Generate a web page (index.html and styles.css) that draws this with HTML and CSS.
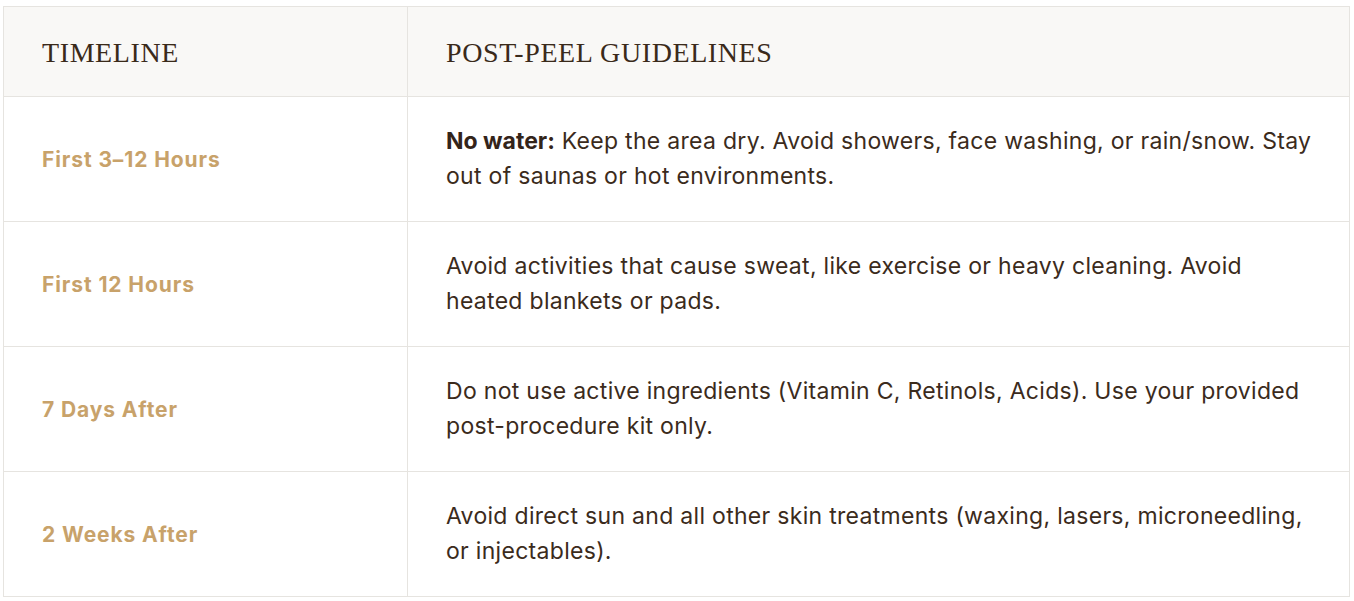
FILE: index.html
```html
<!DOCTYPE html>
<html lang="en">
<head>
<meta charset="utf-8">
<title>Post-Peel Guidelines</title>
<link rel="stylesheet" href="styles.css">
</head>
<body>
<div class="wrap">
<table class="guide">
  <colgroup><col class="col-time"><col class="col-text"></colgroup>
  <thead>
    <tr><th>TIMELINE</th><th>POST-PEEL GUIDELINES</th></tr>
  </thead>
  <tbody>
    <tr>
      <td class="time">First 3–12 Hours</td>
      <td class="text"><strong>No water:</strong> Keep the area dry. Avoid showers, face washing, or rain/snow. Stay out of saunas or hot environments.</td>
    </tr>
    <tr>
      <td class="time">First 12 Hours</td>
      <td class="text">Avoid activities that cause sweat, like exercise or heavy cleaning. Avoid heated blankets or pads.</td>
    </tr>
    <tr>
      <td class="time">7 Days After</td>
      <td class="text">Do not use active ingredients (Vitamin C, Retinols, Acids). Use your provided post-procedure kit only.</td>
    </tr>
    <tr>
      <td class="time">2 Weeks After</td>
      <td class="text">Avoid direct sun and all other skin treatments (waxing, lasers, microneedling, or injectables).</td>
    </tr>
  </tbody>
</table>
</div>
</body>
</html>
```
FILE: styles.css
```css
html, body {
  margin: 0;
  padding: 0;
  background: #ffffff;
}
.wrap {
  padding: 6px 4px 0 3px;
}
.guide {
  width: 1347px;
  border-collapse: collapse;
  table-layout: fixed;
  font-family: "Inter", "Open Sans", sans-serif;
  color: #3b2b1c;
}
.col-time { width: 404px; }
.guide th, .guide td {
  border: 1px solid #e6e4e0;
  text-align: left;
  vertical-align: middle;
}
.guide th {
  background: #f9f8f6;
  font-family: "Liberation Serif", "Times New Roman", serif;
  font-weight: 400;
  font-size: 28px;
  letter-spacing: 0.6px;
  line-height: 36px;
  color: #3a2a1a;
  padding: 28px 38px 25px 38px;
  height: 36px;
}
.guide td {
  padding: 27px 30px 27px 38px;
  height: 70px;
}
.time {
  font-weight: 700;
  font-size: 21px;
  letter-spacing: 0.9px;
  color: #c8a26a;
}
.text {
  font-size: 23px;
  letter-spacing: 0.3px;
  line-height: 35px;
  color: #3b2b1c;
}
.text strong {
  font-weight: 700;
  letter-spacing: 0;
  color: #33241a;
}
```
